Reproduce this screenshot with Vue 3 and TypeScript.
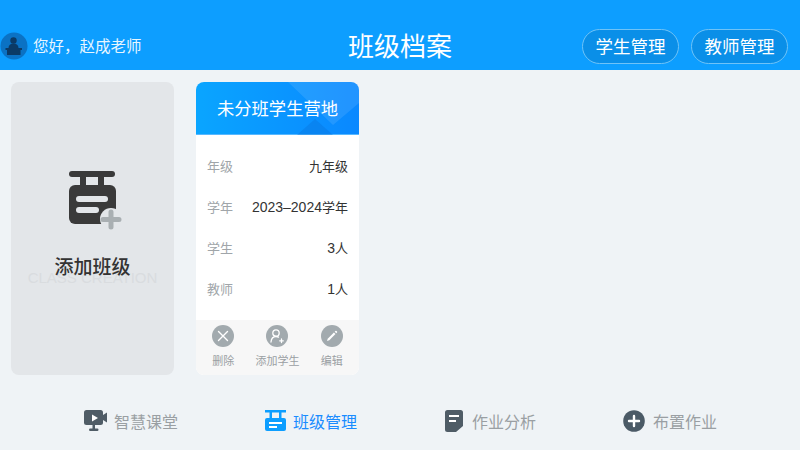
<script setup lang="ts">
const greeting = '您好\uFF0C赵成老师'
const rows: { label: string; num: string; unit: string }[] = [
  { label: '年级', num: '', unit: '九年级' },
  { label: '学年', num: '2023–2024', unit: '学年' },
  { label: '学生', num: '3', unit: '人' },
  { label: '教师', num: '1', unit: '人' },
]
</script>

<template>
  <div class="page">
    <header class="top">
      <div class="who">
        <svg class="avatar" viewBox="0 0 28 28" width="28" height="28">
          <circle cx="14" cy="14" r="13.5" fill="#0b72c4" />
          <circle cx="13.5" cy="8.5" r="3.2" fill="#0b3a66" />
          <path d="M8.5 16c0-3 2-4.500 5-4.500s5 1.500 5 4.500z" fill="#0b3a66" />
          <path d="M5.500 16h16.500v2h-1.500v5h-13.500v-5h-1.500z" fill="#0b3a66" />
        </svg>
        <span class="hello">{{ greeting }}</span>
      </div>
      <h1 class="title">班级档案</h1>
      <div class="actions">
        <button class="pill">学生管理</button>
        <button class="pill">教师管理</button>
      </div>
    </header>

    <main class="cards">
      <section class="add">
        <svg class="add-icon" viewBox="0 0 54 60" width="54" height="60">
          <rect x="1" y="1" width="46" height="6" rx="3" fill="#3a3a3a" />
          <path d="M12 6h6v10h-6zM30 6h6v10h-6z" fill="#3a3a3a" />
          <rect x="1" y="15" width="47" height="39" rx="6" fill="#3a3a3a" />
          <rect x="8" y="26" width="32" height="6" rx="3" fill="#e3e6e9" />
          <rect x="8" y="37" width="23" height="6" rx="3" fill="#e3e6e9" />
          <circle cx="43" cy="49" r="11" fill="#e3e6e9" />
          <path d="M43 42v15M35 49.500h16" stroke="#a9afb2" stroke-width="5" stroke-linecap="round" fill="none" />
        </svg>
        <div class="add-label">
          <span class="ghost">CLASS CREATION</span>
          <span class="add-text">添加班级</span>
        </div>
      </section>

      <section class="card">
        <div class="card-head">
          <svg class="head-art" viewBox="0 0 163 53" width="163" height="53" preserveAspectRatio="none">
            <path d="M92 0L137 43L163 21V0z" fill="#ffffff" fill-opacity=".1" />
            <path d="M101 53L119 37L137 53z" fill="#0a6fd8" fill-opacity=".35" />
          </svg>
          <span class="card-title">未分班学生营地</span>
        </div>
        <div class="card-body">
          <div v-for="r in rows" :key="r.label" class="row">
            <span class="row-label">{{ r.label }}</span>
            <span class="row-value"><span class="num">{{ r.num }}</span>{{ r.unit }}</span>
          </div>
        </div>
        <div class="card-foot">
          <div class="tool">
            <svg viewBox="0 0 22 22" width="22" height="22">
              <circle cx="11" cy="11" r="11" fill="#a2aaae" />
              <path d="M6.500 6.500l9 9M15.500 6.500l-9 9" stroke="#fff" stroke-width="1.400" stroke-linecap="round" fill="none" />
            </svg>
            <span>删除</span>
          </div>
          <div class="tool">
            <svg viewBox="0 0 22 22" width="22" height="22">
              <circle cx="11" cy="11" r="11" fill="#a2aaae" />
              <circle cx="10" cy="8" r="3.200" stroke="#fff" stroke-width="1.300" fill="none" />
              <path d="M5 17c.3-3.400 2.300-5.500 5-5.500 1 0 1.800.2 2.500.6" stroke="#fff" stroke-width="1.300" stroke-linecap="round" fill="none" />
              <path d="M15.500 14v3.600M13.700 15.800h3.600" stroke="#fff" stroke-width="1.300" stroke-linecap="round" fill="none" />
            </svg>
            <span>添加学生</span>
          </div>
          <div class="tool">
            <svg viewBox="0 0 22 22" width="22" height="22">
              <circle cx="11" cy="11" r="11" fill="#a2aaae" />
              <path d="M6 16l.7-2.300 6.200-6.200 1.600 1.600-6.200 6.200z" fill="#fff" />
              <path d="M13.700 6.700l.7-.7a.8.8 0 0 1 1.100 0l.5.500a.8.8 0 0 1 0 1.100l-.7.700z" fill="#fff" />
            </svg>
            <span>编辑</span>
          </div>
        </div>
      </section>
    </main>

    <nav class="nav">
      <a class="nav-item">
        <svg viewBox="0 0 23 22" width="23" height="22">
          <rect x="0" y="0" width="19" height="15" rx="2.500" fill="#4f5c66" />
          <path d="M19 5l4-2.500v10L19 10z" fill="#4f5c66" />
          <path d="M8 4.500l6 3.500-6 3.500z" fill="#fff" />
          <rect x="8.500" y="15" width="2.500" height="4" fill="#4f5c66" />
          <rect x="5" y="18.500" width="9.500" height="2.500" rx="1.200" fill="#4f5c66" />
        </svg>
        <span>智慧课堂</span>
      </a>
      <a class="nav-item active">
        <svg viewBox="0 0 21 22" width="21" height="22">
          <rect x="0" y="0" width="21" height="2.500" fill="#0d9eff" />
          <path d="M4.500 2h2.500v7h-2.500zM14 2h2.500v7H14z" fill="#0d9eff" />
          <rect x="0" y="8" width="21" height="13" rx="2" fill="#0d9eff" />
          <rect x="4" y="12" width="13" height="2" fill="#fff" />
          <rect x="4" y="16" width="8" height="2" fill="#fff" />
        </svg>
        <span>班级管理</span>
      </a>
      <a class="nav-item doc">
        <svg viewBox="0 0 18 22" width="18" height="22">
          <path d="M2.500 0h13A2.500 2.500 0 0 1 18 2.500v13.500L11 22H2.500A2.500 2.500 0 0 1 0 19.500v-17A2.500 2.500 0 0 1 2.500 0z" fill="#4f5c66" />
          <rect x="4" y="5" width="10" height="2" fill="#fff" />
          <rect x="4" y="10" width="7" height="2" fill="#fff" />
        </svg>
        <span>作业分析</span>
      </a>
      <a class="nav-item plus">
        <svg viewBox="0 0 22 22" width="22" height="22">
          <circle cx="11" cy="11" r="10.800" fill="#4b5a66" />
          <path d="M11 6v10M6 11h10" stroke="#fff" stroke-width="2.400" stroke-linecap="round" fill="none" />
        </svg>
        <span>布置作业</span>
      </a>
    </nav>
  </div>
</template>

<style>
html,
body {
  margin: 0;
  background: #eff3f6;
}
</style>

<style scoped>
.page {
  width: 800px;
  height: 450px;
  overflow: hidden;
  background: #eff3f6;
  font-family: "Noto Sans CJK SC", "Noto Sans", sans-serif;
}
.top {
  height: 70px;
  box-sizing: border-box;
  padding: 22px 12px 0;
  background: #0d9eff;
  color: #fff;
  display: grid;
  grid-template-columns: 1fr auto 1fr;
  align-items: center;
}
.who {
  display: flex;
  align-items: center;
  gap: 5px;
  margin-left: -12px;
}
.avatar {
  display: block;
}
.hello {
  font-size: 15.5px;
  line-height: 24px;
  margin-bottom: 2px;
  color: #e8f6ff;
}
.title {
  margin: 0 0 2px;
  font-size: 26px;
  line-height: 46px;
  font-weight: 400;
}
.actions {
  display: flex;
  justify-content: flex-end;
  gap: 12px;
}
.pill {
  width: 97px;
  height: 35px;
  box-sizing: border-box;
  padding: 0 0 2px;
  border: 1px solid #6fc3f7;
  border-radius: 18px;
  background: #0a8fe8;
  color: #fff;
  font-family: inherit;
  font-size: 17.5px;
  line-height: 31px;
}
.cards {
  display: flex;
  gap: 22px;
  padding: 12px 0 0 11px;
}
.add {
  width: 163px;
  height: 293px;
  border-radius: 8px;
  background: #e3e6e9;
  display: flex;
  flex-direction: column;
  align-items: center;
  padding-top: 88px;
  box-sizing: border-box;
}
.add-icon {
  display: block;
  margin-left: 4px;
}
.add-label {
  position: relative;
  margin-top: 21px;
  width: 163px;
  text-align: center;
}
.add-text {
  position: relative;
  display: block;
  font-size: 19px;
  line-height: 30px;
  font-weight: 500;
  color: #333;
}
.ghost {
  position: absolute;
  left: 0;
  right: 0;
  top: 17px;
  font-family: "Liberation Sans", sans-serif;
  font-size: 15px;
  line-height: 20px;
  color: #d9dcdf;
  white-space: nowrap;
}
.card {
  width: 163px;
  height: 293px;
  border-radius: 8px;
  overflow: hidden;
  background: #fff;
  display: flex;
  flex-direction: column;
}
.card-head {
  position: relative;
  height: 53px;
  flex: none;
  box-sizing: border-box;
  border-bottom: 1px solid #57b8ff;
  background: linear-gradient(90deg, #0aa5ff, #0a88ff);
  color: #fff;
  display: flex;
  align-items: center;
  justify-content: center;
}
.head-art {
  position: absolute;
  left: 0;
  top: 0;
}
.card-title {
  position: relative;
  font-size: 17.3px;
  line-height: 26px;
}
.card-body {
  flex: 1;
  padding: 10px 11px 0;
}
.row {
  height: 41px;
  display: flex;
  align-items: center;
  justify-content: space-between;
  font-size: 13px;
}
.row-label {
  color: #a0a5a9;
}
.row-value {
  color: #333;
}
.num {
  font-family: "Liberation Sans", sans-serif;
  font-size: 14px;
}
.card-foot {
  height: 55px;
  flex: none;
  box-sizing: border-box;
  padding-top: 5px;
  background: #f7f7f7;
  display: grid;
  grid-template-columns: repeat(3, 1fr);
}
.tool {
  display: flex;
  flex-direction: column;
  align-items: center;
  gap: 4px;
  font-size: 11px;
  line-height: 18px;
  color: #9a9fa3;
}
.tool svg {
  display: block;
}
.nav {
  display: flex;
  padding: 35px 0 0 84px;
  gap: 87px;
}
.nav-item {
  display: flex;
  align-items: center;
  gap: 7px;
  font-size: 16px;
  line-height: 22px;
  margin-top: -1px;
  color: #9a9fa3;
}
.nav-item svg {
  display: block;
  margin-top: 1px;
}
.nav-item.active {
  color: #1a8cff;
}
.nav-item.doc {
  margin-left: 1px;
  gap: 9px;
}
.nav-item.plus {
  gap: 8px;
}
</style>
